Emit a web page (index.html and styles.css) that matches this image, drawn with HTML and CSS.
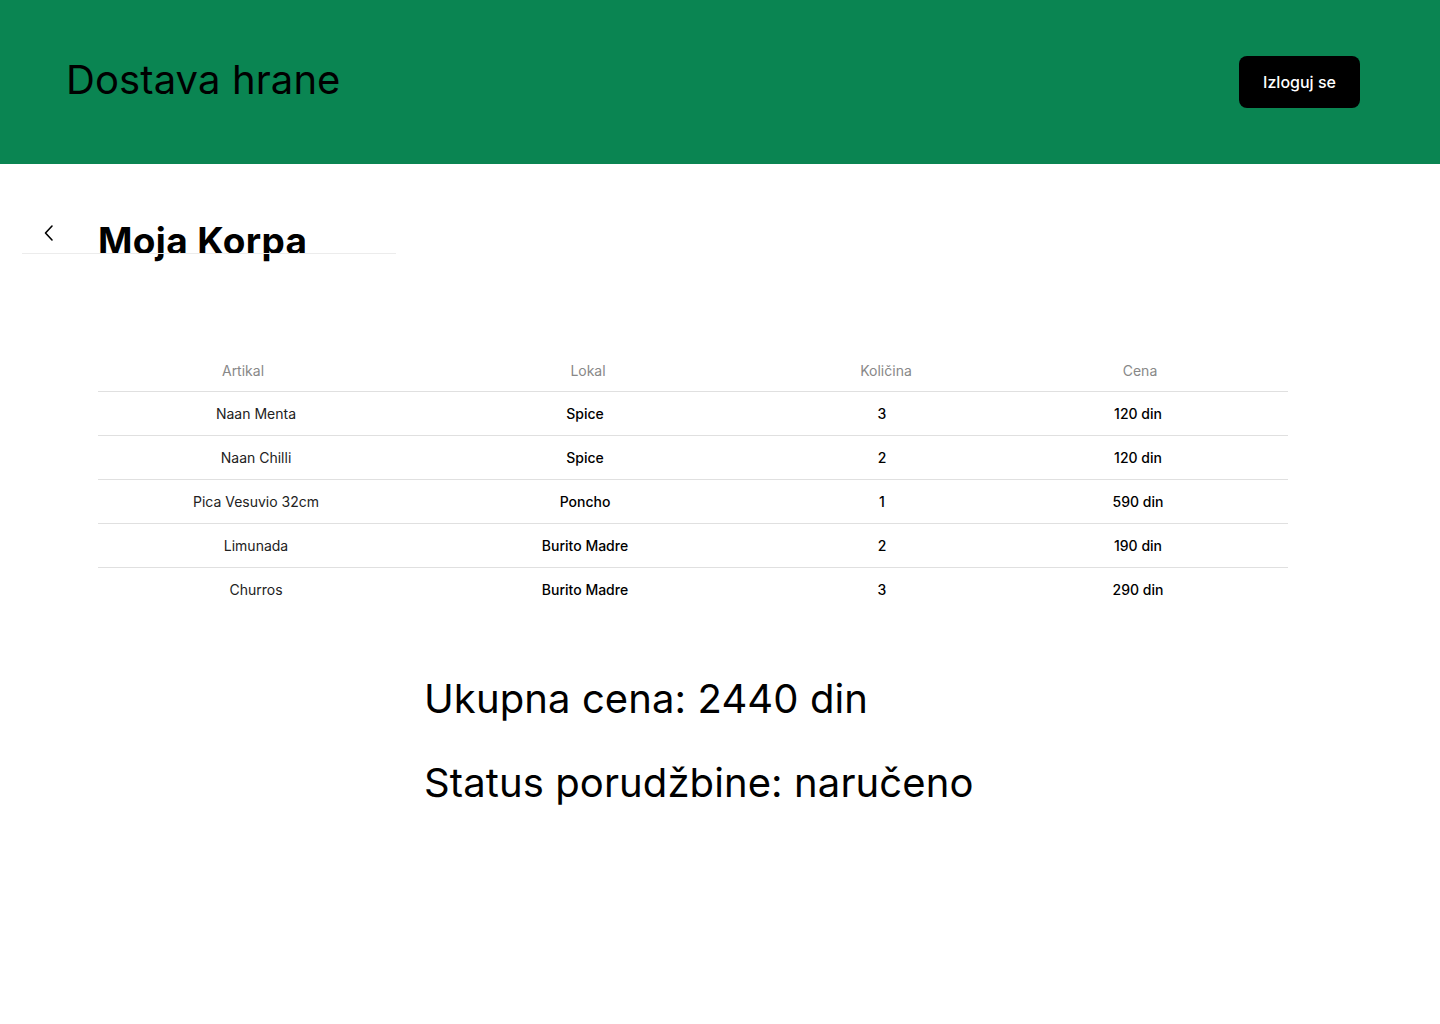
FILE: index.html
```html
<!DOCTYPE html>
<html lang="sr">
<head>
<meta charset="utf-8">
<title>Dostava hrane</title>
<link rel="stylesheet" href="styles.css">
</head>
<body>
<header class="topbar">
  <h1 class="brand">Dostava hrane</h1>
  <button class="logout">Izloguj se</button>
</header>
<main class="content">
  <div class="title-row">
    <a class="back" href="#" aria-label="Nazad">
      <svg width="12" height="18" viewBox="0 0 12 18"><path d="M9 2 L2.5 9 L9 16" fill="none" stroke="#000" stroke-width="1.6" stroke-linecap="round" stroke-linejoin="round"/></svg>
    </a>
    <h2 class="page-title">Moja Korpa</h2>
    <div class="title-line"></div>
  </div>
  <div class="cart">
    <div class="row head">
      <div>Artikal</div><div>Lokal</div><div>Količina</div><div>Cena</div>
    </div>
    <div class="row">
      <div class="item">Naan Menta</div><div class="shop">Spice</div><div class="num">3</div><div class="num">120 din</div>
    </div>
    <div class="row">
      <div class="item">Naan Chilli</div><div class="shop">Spice</div><div class="num">2</div><div class="num">120 din</div>
    </div>
    <div class="row">
      <div class="item">Pica Vesuvio 32cm</div><div class="shop">Poncho</div><div class="num">1</div><div class="num">590 din</div>
    </div>
    <div class="row">
      <div class="item">Limunada</div><div class="shop">Burito Madre</div><div class="num">2</div><div class="num">190 din</div>
    </div>
    <div class="row last">
      <div class="item">Churros</div><div class="shop">Burito Madre</div><div class="num">3</div><div class="num">290 din</div>
    </div>
  </div>
  <div class="summary">
    <p class="sum-line">Ukupna cena: 2440 din</p>
    <p class="sum-line">Status porudžbine: naručeno</p>
  </div>
</main>
</body>
</html>
```
FILE: styles.css
```css
* { box-sizing: border-box; }
html, body { margin: 0; padding: 0; }
body {
  font-family: Inter, "Noto Sans", sans-serif;
  color: #000;
  background: #fff;
}
.topbar {
  height: 164px;
  background: #0a8552;
  display: flex;
  align-items: center;
  justify-content: space-between;
  padding: 0 80px 0 66px;
}
.brand {
  margin: 0 0 4px 0;
  font-size: 40px;
  font-weight: 400;
  line-height: 48px;
  letter-spacing: 0.1px;
  color: #000;
}
.logout {
  width: 121px;
  height: 52px;
  background: #000;
  color: #fff;
  border: none;
  border-radius: 8px;
  font-family: Inter, sans-serif;
  font-size: 16px;
  font-weight: 500;
}
.title-row {
  position: relative;
  height: 110px;
  padding-top: 53px;
  display: flex;
  align-items: flex-start;
}
.back {
  display: block;
  margin: 7px 0 0 43px;
  width: 12px;
  height: 18px;
}
.back svg { display: block; }
.page-title {
  margin: 0 0 0 43px;
  font-size: 37px;
  font-weight: 700;
  line-height: 48px;
  letter-spacing: 0.35px;
}
.title-line {
  position: absolute;
  left: 22px;
  top: 89px;
  width: 374px;
  height: 1px;
  background: #ececec;
}
.cart {
  margin-left: 98px;
  width: 1190px;
  padding-top: 86px;
}
.row {
  display: grid;
  grid-template-columns: 316px 342px 252px 260px 20px;
  height: 44px;
  align-items: center;
  border-bottom: 1px solid #e0e0e0;
  font-size: 14px;
  line-height: 20px;
}
.row > div { text-align: center; }
.row.head {
  height: 32px;
  padding-top: 1px;
  align-items: start;
  color: #888;
  grid-template-columns: 290px 400px 196px 312px;
}
.row.last { border-bottom: none; }
.item { color: #222; font-weight: 400; }
.shop, .num { color: #000; font-weight: 500; }
.summary {
  padding: 63px 0 0 424px;
}
.sum-line {
  margin: 0 0 36px 0;
  font-size: 40px;
  line-height: 48px;
  font-weight: 400;
  letter-spacing: 0.1px;
}
```
